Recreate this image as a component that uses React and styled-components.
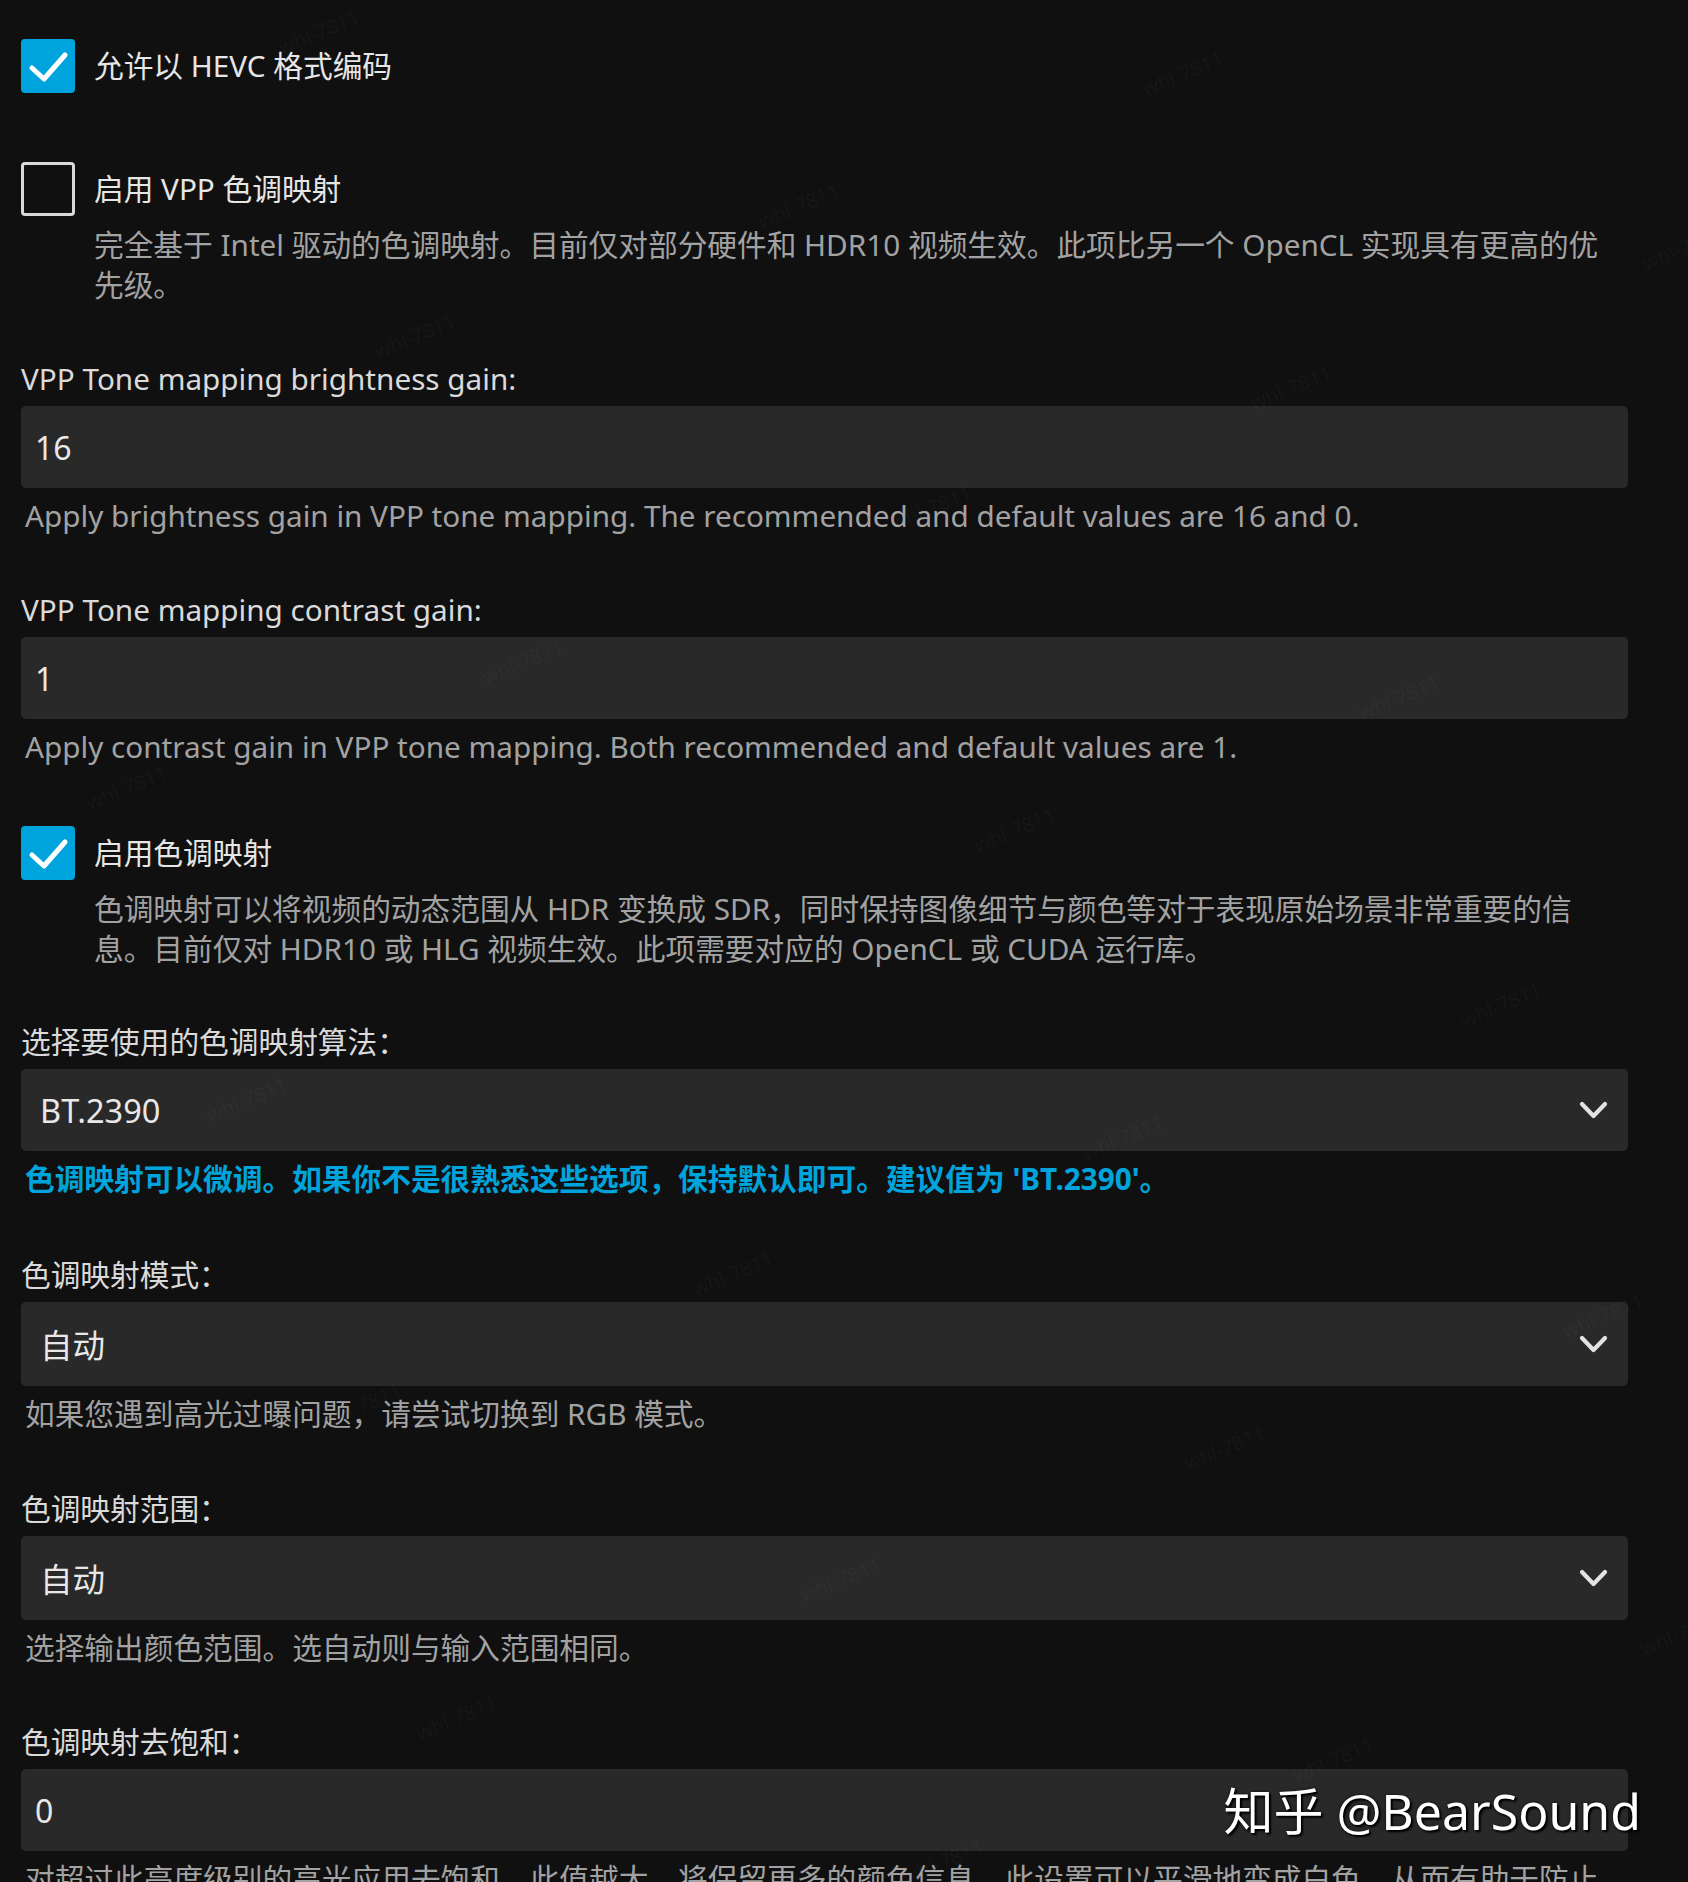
import React from "react";
import styled, { createGlobalStyle } from "styled-components";

const Global = createGlobalStyle`
  html, body { margin: 0; padding: 0; background: #101010; }
  body {
    font-family: "Noto Sans", "Noto Sans CJK SC", sans-serif;
    -webkit-font-smoothing: antialiased;
  }
`;

const Page = styled.div`
  position: relative;
  box-sizing: border-box;
  width: 1688px;
  height: 1882px;
  overflow: hidden;
  padding: 39px 60px 0 21px;
  background: #101010;
  font-family: "Noto Sans", "Noto Sans CJK SC", sans-serif;
  font-size: 29.7px;
`;

const CheckBlock = styled.div`
  display: flex;
  flex-direction: column;
  margin-bottom: ${(p) => p.$mb}px;
`;

const CheckRow = styled.label`
  display: flex;
  align-items: center;
  gap: 19px;
  height: 54px;
`;

const Box = styled.span`
  box-sizing: border-box;
  flex: none;
  width: 54px;
  height: 54px;
  border-radius: 4px;
  display: flex;
  align-items: center;
  justify-content: center;
  background: ${(p) => (p.$checked ? "#00a4dc" : "transparent")};
  border: ${(p) => (p.$checked ? "none" : "3.5px solid #d9d9d9")};
`;

const CheckLabel = styled.span`
  color: #e6e6e6;
  font-size: 29.7px;
  line-height: 40px;
`;

const Desc = styled.div`
  margin: 9px 0 0 73px;
  max-width: ${(p) => p.$maxw}px;
  color: #a2a2a2;
  font-size: 29.7px;
  line-height: 40px;
`;

const Section = styled.div`
  display: flex;
  flex-direction: column;
  margin-bottom: ${(p) => p.$mb}px;
`;

const Heading = styled.div`
  color: #dadada;
  font-size: 29.7px;
  line-height: 40px;
  margin-bottom: 7px;
`;

const TextInput = styled.input`
  box-sizing: border-box;
  width: 100%;
  height: 82px;
  border: none;
  outline: none;
  border-radius: 5px;
  background: #292929;
  color: #e8e8e8;
  padding: 0 14px;
  font-family: "Noto Sans", "Noto Sans CJK SC", sans-serif;
  font-size: 32px;
`;

const SelectBox = styled.div`
  box-sizing: border-box;
  width: 100%;
  height: ${(p) => p.$h}px;
  border-radius: 5px;
  background: #292929;
  color: #e8e8e8;
  padding: 0 20px 0 19px;
  display: flex;
  align-items: center;
  justify-content: space-between;
  font-size: 32.5px;
`;

const Help = styled.div`
  margin: 8px 0 0 4px;
  color: ${(p) => (p.$accent ? "#00a4dc" : "#a2a2a2")};
  font-weight: ${(p) => (p.$accent ? 700 : 400)};
  font-size: 29.7px;
  line-height: 40px;
`;

const Watermark = styled.div`
  position: absolute;
  right: 47px;
  top: 1780px;
  color: #ffffff;
  font-family: "Noto Sans", "Noto Sans CJK SC", sans-serif;
  font-size: 50px;
  line-height: 62px;
  text-shadow: 2px 2px 2px #000, 0 0 3px rgba(0, 0, 0, 0.7);
  white-space: nowrap;
`;

const Faint = styled.span`
  position: absolute;
  color: rgba(255, 255, 255, 0.035);
  font-family: "Noto Sans", sans-serif;
  font-size: 20px;
  transform: rotate(-22deg);
  pointer-events: none;
  white-space: nowrap;
`;

const Check = () => (
  <svg width="54" height="54" viewBox="0 0 54 54" fill="none">
    <polyline
      points="11,29 23,40 44,16"
      stroke="#fff"
      strokeWidth="5"
      strokeLinecap="round"
      strokeLinejoin="round"
    />
  </svg>
);

const Chevron = () => (
  <svg width="29" height="19" viewBox="0 0 29 19" fill="none">
    <polyline
      points="3,3 14.5,15 26,3"
      stroke="#e2e2e2"
      strokeWidth="4.2"
      strokeLinecap="round"
      strokeLinejoin="round"
    />
  </svg>
);

const CheckField = ({ checked, label, desc, mb, maxw = 1534 }) => (
  <CheckBlock $mb={mb}>
    <CheckRow>
      <Box $checked={checked}>{checked && <Check />}</Box>
      <CheckLabel>{label}</CheckLabel>
    </CheckRow>
    {desc && <Desc $maxw={maxw}>{desc}</Desc>}
  </CheckBlock>
);

const InputField = ({ label, value, help, mb }) => (
  <Section $mb={mb}>
    <Heading>{label}</Heading>
    <TextInput defaultValue={value} readOnly />
    <Help>{help}</Help>
  </Section>
);

const SelectField = ({ label, value, help, accent, mb, h = 84 }) => (
  <Section $mb={mb}>
    <Heading>{label}</Heading>
    <SelectBox $h={h}>
      <span>{value}</span>
      <Chevron />
    </SelectBox>
    <Help $accent={accent}>{help}</Help>
  </Section>
);

const faint = [
  [276, 18], [1140, 60], [756, 192], [1640, 234], [372, 322], [1248, 374],
  [888, 494], [480, 648], [1356, 684], [84, 774], [972, 816], [1458, 991],
  [204, 1086], [1080, 1124], [690, 1260], [1560, 1302], [318, 1392],
  [1182, 1434], [798, 1566], [1638, 1620], [414, 1704], [1290, 1746], [900, 1848],
];

export default function App() {
  return (
    <>
      <Global />
      <Page>
        <CheckField checked label="允许以 HEVC 格式编码" mb={69} />
        <CheckField
          label="启用 VPP 色调映射"
          desc="完全基于 Intel 驱动的色调映射。目前仅对部分硬件和 HDR10 视频生效。此项比另一个 OpenCL 实现具有更高的优先级。"
          maxw={1516}
          mb={54}
        />
        <InputField
          label="VPP Tone mapping brightness gain:"
          value="16"
          help="Apply brightness gain in VPP tone mapping. The recommended and default values are 16 and 0."
          mb={54}
        />
        <InputField
          label="VPP Tone mapping contrast gain:"
          value="1"
          help="Apply contrast gain in VPP tone mapping. Both recommended and default values are 1."
          mb={59}
        />
        <CheckField
          checked
          label="启用色调映射"
          desc="色调映射可以将视频的动态范围从 HDR 变换成 SDR，同时保持图像细节与颜色等对于表现原始场景非常重要的信息。目前仅对 HDR10 或 HLG 视频生效。此项需要对应的 OpenCL 或 CUDA 运行库。"
          maxw={1490}
          mb={53}
        />
        <SelectField
          label="选择要使用的色调映射算法："
          value="BT.2390"
          accent
          h={82}
          help="色调映射可以微调。如果你不是很熟悉这些选项，保持默认即可。建议值为 'BT.2390'。"
          mb={56}
        />
        <SelectField
          label="色调映射模式："
          value="自动"
          help="如果您遇到高光过曝问题，请尝试切换到 RGB 模式。"
          mb={55}
        />
        <SelectField
          label="色调映射范围："
          value="自动"
          help="选择输出颜色范围。选自动则与输入范围相同。"
          mb={54}
        />
        <InputField
          label="色调映射去饱和："
          value="0"
          help="对超过此亮度级别的高光应用去饱和。此值越大，将保留更多的颜色信息。此设置可以平滑地变成白色，从而有助于防止 HDR 高光区域出现不自然的效果。"
          mb={0}
        />
        {faint.map(([x, y], i) => (
          <Faint key={i} style={{ left: x, top: y }}>
            whl-7811
          </Faint>
        ))}
        <Watermark>知乎 @BearSound</Watermark>
      </Page>
    </>
  );
}
